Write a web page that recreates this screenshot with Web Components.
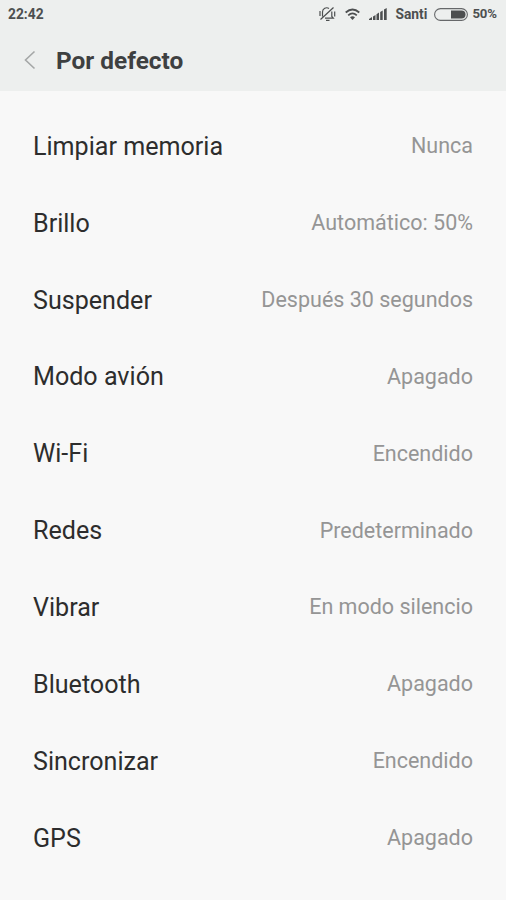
<!DOCTYPE html>
<html lang="es"><head><meta charset="utf-8"><title>Por defecto</title>
<style>body{margin:0;background:#f8f8f8;font-family:Roboto,"Noto Sans",sans-serif}</style></head><body>
<settings-page></settings-page>
<script>
const define=(name,html)=>customElements.define(name,class extends HTMLElement{
 constructor(){super();this.attachShadow({mode:'open'}).innerHTML=html}});
define('status-bar',`<style>
:host{display:flex;height:28px;align-items:center;box-sizing:border-box;padding:0 9px 0 8px;color:#4d4f50;font-size:13.800px;font-weight:700;line-height:28px}
.time{margin-right:auto}svg{display:block;flex:none}.bell{margin-right:9px}.wifi{margin-right:9px}.signal{margin-right:8px}.battery{margin:0 4px 0 7px}.percent{font-size:13.200px;letter-spacing:-.1px}
</style><span class="time">22:42</span>
<svg class="bell" width="17" height="16" viewBox="0 0 17 16" fill="none" stroke="#4d4f50" stroke-width="1.200"><path d="M3.500 10.500V6a4.200 4.200 0 0 1 6.500-3.500M12.800 5.500v5l1.500 1.700H6M7 14.300h3.500M1.500 13.500 14.500 1.500M1 5v5M15.700 5.500v5"/></svg>
<svg class="wifi" width="15" height="12" viewBox="0 0 15 12" fill="none" stroke="#4d4f50" stroke-width="1.700"><path d="M.7 4.500Q7.500-1.500 14.300 4.500M3.200 7.300Q7.500 3.500 11.800 7.300"/><path d="M5 9.300Q7.500 7.300 10 9.300L7.500 12Z" fill="#4d4f50" stroke="none"/></svg>
<svg class="signal" width="18" height="12" viewBox="0 0 18 12" fill="#4d4f50"><path d="M0 12v-1l3-2v3zM4 12V8.500L6.500 7v5zM7.500 12V6.200L10 4.600V12zM11.200 12V3.900l2.500-1.500V12zM15 12V1.500L17.700 0v12z"/></svg>
<span>Santi</span>
<svg class="battery" width="34" height="13" viewBox="0 0 34 13"><rect x=".6" y=".6" width="32.800" height="11.800" rx="5.900" fill="none" stroke="#66686a" stroke-width="1.100"/><path d="M17 2.500h10.500a4 4 0 0 1 0 8H17z" fill="#4d4f50"/></svg>
<span class="percent">50%</span>`);
define('title-bar',`<style>:host{display:flex;height:63px;align-items:center;box-sizing:border-box;padding:0 24px;color:#3e4041;font-size:24.400px;font-weight:700}svg{margin-right:20px}slot{display:block;padding-top:1px}</style>
<svg width="12" height="20" viewBox="0 0 12 20" fill="none" stroke="#a5a7a7" stroke-width="1.600"><path d="M10.500 1.500 1.500 10l9 8.500"/></svg><slot></slot>`);
define('setting-row',`<style>:host{display:flex;height:76.850px;align-items:center;justify-content:space-between;color:#2d2d2d;font-size:25.100px;line-height:32px}.value{color:#959595;font-size:21.500px;padding-bottom:1px}</style><slot></slot><span class="value"><slot name="value"></slot></span>`);
define('settings-page',`<style>:host{display:block;height:900px;overflow:hidden;background:#f8f8f8}header{background:#edefee}main{padding:17.500px 33px 0}</style>
<header><status-bar></status-bar><title-bar>Por defecto</title-bar></header><main>${[['Limpiar memoria','Nunca'],['Brillo','Automático: 50%'],['Suspender','Después 30 segundos'],['Modo avión','Apagado'],['Wi-Fi','Encendido'],['Redes','Predeterminado'],['Vibrar','En modo silencio'],['Bluetooth','Apagado'],['Sincronizar','Encendido'],['GPS','Apagado']].map(([a,b])=>`<setting-row>${a}<span slot="value">${b}</span></setting-row>`).join('')}</main>`);
</script></body></html>
